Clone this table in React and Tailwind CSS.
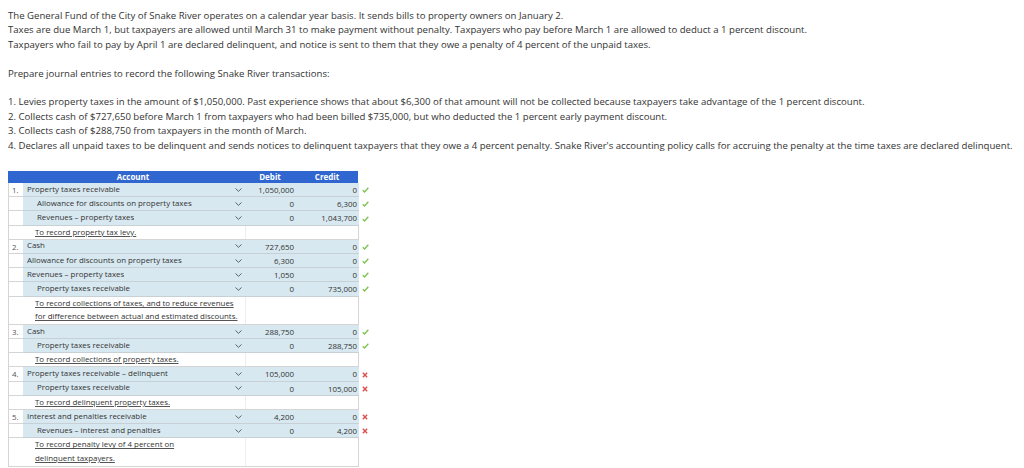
import React from 'react';

const intro = [
  'The General Fund of the City of Snake River operates on a calendar year basis. It sends bills to property owners on January 2.',
  'Taxes are due March 1, but taxpayers are allowed until March 31 to make payment without penalty. Taxpayers who pay before March 1 are allowed to deduct a 1 percent discount.',
  'Taxpayers who fail to pay by April 1 are declared delinquent, and notice is sent to them that they owe a penalty of 4 percent of the unpaid taxes.',
];

const items = [
  '1. Levies property taxes in the amount of $1,050,000. Past experience shows that about $6,300 of that amount will not be collected because taxpayers take advantage of the 1 percent discount.',
  '2. Collects cash of $727,650 before March 1 from taxpayers who had been billed $735,000, but who deducted the 1 percent early payment discount.',
  '3. Collects cash of $288,750 from taxpayers in the month of March.',
  "4. Declares all unpaid taxes to be delinquent and sends notices to delinquent taxpayers that they owe a 4 percent penalty. Snake River's accounting policy calls for accruing the penalty at the time taxes are declared delinquent.",
];

const entries = [
  {
    no: '1.',
    lines: [
      { account: 'Property taxes receivable', debit: '1,050,000', credit: '0', indent: false, ok: true },
      { account: 'Allowance for discounts on property taxes', debit: '0', credit: '6,300', indent: true, ok: true },
      { account: 'Revenues – property taxes', debit: '0', credit: '1,043,700', indent: true, ok: true },
    ],
    memo: ['To record property tax levy.'],
  },
  {
    no: '2.',
    lines: [
      { account: 'Cash', debit: '727,650', credit: '0', indent: false, ok: true },
      { account: 'Allowance for discounts on property taxes', debit: '6,300', credit: '0', indent: false, ok: true },
      { account: 'Revenues – property taxes', debit: '1,050', credit: '0', indent: false, ok: true },
      { account: 'Property taxes receivable', debit: '0', credit: '735,000', indent: true, ok: true },
    ],
    memo: ['To record collections of taxes, and to reduce revenues', 'for difference between actual and estimated discounts.'],
  },
  {
    no: '3.',
    lines: [
      { account: 'Cash', debit: '288,750', credit: '0', indent: false, ok: true },
      { account: 'Property taxes receivable', debit: '0', credit: '288,750', indent: true, ok: true },
    ],
    memo: ['To record collections of property taxes.'],
  },
  {
    no: '4.',
    lines: [
      { account: 'Property taxes receivable – delinquent', debit: '105,000', credit: '0', indent: false, ok: false },
      { account: 'Property taxes receivable', debit: '0', credit: '105,000', indent: true, ok: false },
    ],
    memo: ['To record delinquent property taxes.'],
  },
  {
    no: '5.',
    lines: [
      { account: 'Interest and penalties receivable', debit: '4,200', credit: '0', indent: false, ok: false },
      { account: 'Revenues – interest and penalties', debit: '0', credit: '4,200', indent: true, ok: false },
    ],
    memo: ['To record penalty levy of 4 percent on', 'delinquent taxpayers.'],
  },
];

const Chevron = () => (
  <svg width="7" height="4" viewBox="0 0 7 4" className="shrink-0">
    <path d="M0.5 0.5 L3.5 3.3 L6.5 0.5" fill="none" stroke="#555" strokeWidth="0.9" />
  </svg>
);

const Mark = ({ ok }) =>
  ok ? (
    <svg width="7" height="6" viewBox="0 0 8 7">
      <path d="M0.8 3.8 L2.9 5.8 L7.3 0.9" fill="none" stroke="#7cc24f" strokeWidth="1.5" />
    </svg>
  ) : (
    <svg width="6" height="6" viewBox="0 0 7 7">
      <path d="M1 1 L6 6 M6 1 L1 6" fill="none" stroke="#d9534f" strokeWidth="1.7" />
    </svg>
  );

const EntryLine = ({ no, line }) => (
  <div className="flex h-[14.2px]">
    <div className="w-[14px] shrink-0 border-b border-[#d5d5d5] bg-white pl-[3px] leading-[14px] text-[#555]">{no}</div>
    <div className="flex w-[336px] shrink-0 border-b border-[#c7d0d5] bg-[#d8e8f0]">
      <div className={`flex w-[222px] items-center justify-between pr-[3px] ${line.indent ? 'pl-[14px]' : 'pl-[4px]'}`}>
        <span className="truncate">{line.account}</span>
        <Chevron />
      </div>
      <div className="w-[52px] pr-[3px] text-right leading-[14px]">{line.debit}</div>
      <div className="w-[62px] pr-[2px] text-right leading-[14px]">{line.credit}</div>
    </div>
    <div className="flex w-[14px] items-center pl-[3px]">
      <Mark ok={line.ok} />
    </div>
  </div>
);

const MemoRow = ({ text }) => (
  <div className="flex">
    <div
      className={`flex w-[350px] shrink-0 border-b border-r border-[#d5d5d5] bg-white ${text.length > 1 ? 'h-[28.4px]' : 'h-[14.2px]'}`}
    >
      <div className="w-[236px] pl-[26px] leading-[13.9px]">
        {text.map((t) => (
          <div key={t} className="underline decoration-[#555]">{t}</div>
        ))}
      </div>
      <div className="flex-1 border-l border-[#eeeeee]" />
    </div>
  </div>
);

export default function App() {
  return (
    <div className="h-[468px] w-[1024px] overflow-hidden bg-white px-2 pt-[9px] font-['Open_Sans',sans-serif] text-[#333]">
      <div className="text-[9.6px] leading-[14.4px]">
        {intro.map((t) => (
          <p key={t} className="whitespace-nowrap">{t}</p>
        ))}
        <p className="mt-[14.4px]">Prepare journal entries to record the following Snake River transactions:</p>
        <div className="mt-[14.4px]">
          {items.map((t) => (
            <p key={t} className="whitespace-nowrap">{t}</p>
          ))}
        </div>
      </div>

      <div className="mt-[18px] text-[7.9px]">
        <div className="flex h-[12px] w-[350px] bg-[#2f66d0] text-[8px] font-bold leading-[12px] text-white">
          <div className="w-[14px]" />
          <div className="w-[222px] text-center">Account</div>
          <div className="w-[52px] text-center">Debit</div>
          <div className="w-[62px] text-center">Credit</div>
        </div>
        <div className="w-[364px] border-l border-[#d5d5d5]">
          {entries.map((e) => (
            <div key={e.no}>
              {e.lines.map((line, i) => (
                <EntryLine key={i} no={i === 0 ? e.no : ''} line={line} />
              ))}
              <MemoRow text={e.memo} />
            </div>
          ))}
        </div>
      </div>
    </div>
  );
}
